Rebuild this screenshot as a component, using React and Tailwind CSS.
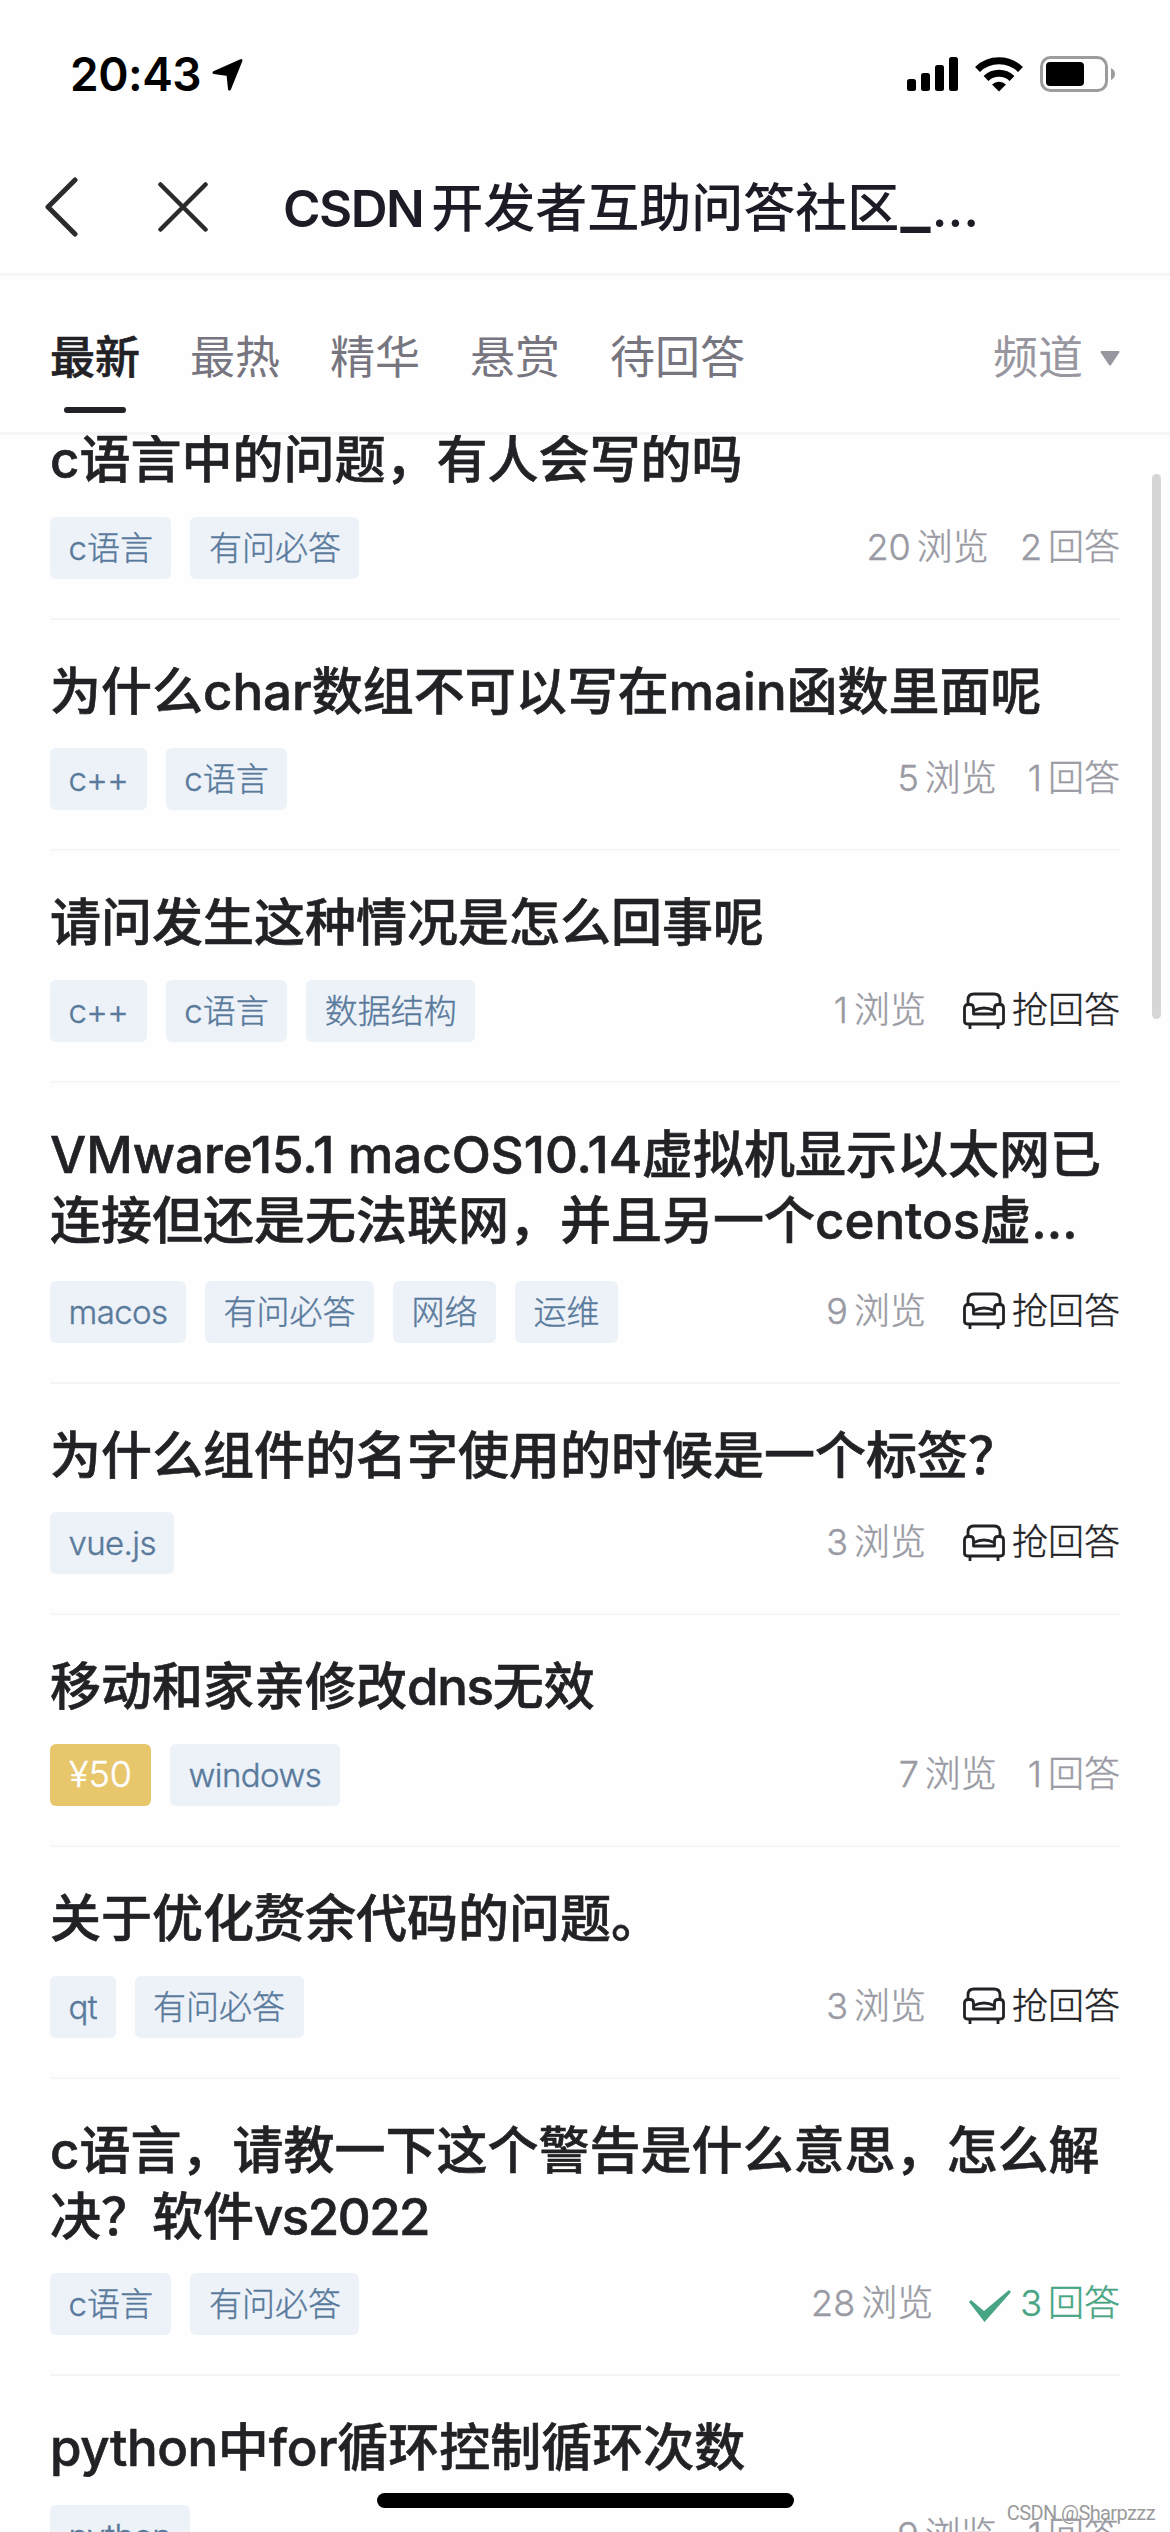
const TABS = ["最热", "精华", "悬赏", "待回答"];

const QUESTIONS = [
  { title: "c语言中的问题，有人会写的吗", tags: ["c语言", "有问必答"], views: 20, answers: 2 },
  { title: "为什么char数组不可以写在main函数里面呢", tags: ["c++", "c语言"], views: 5, answers: 1 },
  { title: "请问发生这种情况是怎么回事呢", tags: ["c++", "c语言", "数据结构"], views: 1, answers: 0 },
  {
    title: "VMware15.1 macOS10.14虚拟机显示以太网已连接但还是无法联网，并且另一个centos虚…",
    tags: ["macos", "有问必答", "网络", "运维"],
    views: 9,
    answers: 0,
    clamped: true,
  },
  { title: "为什么组件的名字使用的时候是一个标签？", tags: ["vue.js"], views: 3, answers: 0 },
  { title: <>移动和家亲修改<span className="tracking-[-1.300px]">dns</span>无效</>, reward: 50, tags: ["windows"], views: 7, answers: 1 },
  { title: "关于优化赘余代码的问题。", tags: ["qt", "有问必答"], views: 3, answers: 0 },
  {
    title: <>c语言，请教一下这个警告是什么意思，怎么解决？软件<span className="tracking-[-1.500px]">vs2022</span></>,
    tags: ["c语言", "有问必答"],
    views: 28,
    answers: 3,
    solved: true,
  },
  { title: <><span className="tracking-[-0.400px]">python</span>中for循环控制循环次数</>, tags: ["python"], views: 9, answers: 1 },
];

function SofaIcon() {
  return (
    <svg className="h-[37px] w-[42px]" viewBox="0 0 42 37" fill="none" stroke="#222226" strokeWidth="2.800" strokeLinejoin="round">
      <path d="M5 12V8Q5 2 11 2H31Q37 2 37 8V12" />
      <path d="M10.500 22V16Q10.500 12.500 7 12.500H5Q1.500 12.500 1.500 16V29Q1.500 32 4.500 32H37.500Q40.500 32 40.500 29V16Q40.500 12.500 37 12.500H35Q31.500 12.500 31.500 16V22Z" />
      <path d="M7 32V37M35 32V37" />
      <path d="M11 18.500Q21 13.500 31 18.500" />
    </svg>
  );
}

function CheckIcon() {
  return (
    <svg className="mt-[5px] h-[32px] w-[42px]" viewBox="0 0 42 32" fill="#47a583">
      <path d="M0 12 2 10 15 21 40 0 42 2 15.500 32Z" />
    </svg>
  );
}

function StatusBar() {
  return (
    <div className="flex h-[148px] items-center justify-between pl-[70px] pr-[54px]">
      <div className="flex items-center gap-[11px]">
        <span className="text-[46px] font-semibold leading-none tracking-[-0.500px] text-black">20:43</span>
        <svg className="h-[33px] w-[31px]" viewBox="0 0 31 33" stroke="#000" strokeWidth="3" strokeLinejoin="round">
          <path d="M2 14.500 29 2.500 17.500 31 16 16.500Z" />
        </svg>
      </div>
      <div className="flex items-center">
        <svg className="h-[34px] w-[51px]" viewBox="0 0 51 34">
          <rect x="0" y="22" width="9" height="12" rx="2.5" />
          <rect x="14" y="16" width="9" height="18" rx="2.5" />
          <rect x="28" y="8" width="9" height="26" rx="2.5" />
          <rect x="42" y="0" width="9" height="34" rx="2.5" />
        </svg>
        <svg className="ml-[17px] h-[36px] w-[48px]" viewBox="0 0 48 36" fill="none" stroke="#000" strokeWidth="7">
          <path d="M2.5 13.500a31 31 0 0 1 43 0" />
          <path d="M11 22.500a19 19 0 0 1 26 0" />
          <path d="M24 35.500 17 28.500a10 10 0 0 1 14 0Z" fill="#000" stroke="none" />
        </svg>
        <svg className="ml-[17px] h-[36px] w-[76px]" viewBox="0 0 76 36">
          <rect x="1.500" y="1.500" width="65" height="33" rx="9" fill="none" stroke="#9c9c9c" strokeWidth="3" />
          <rect x="6" y="6" width="38" height="24" rx="4" />
          <path d="M71 12q4 2 4 6t-4 6Z" fill="#9c9c9c" />
        </svg>
      </div>
    </div>
  );
}

function NavBar() {
  return (
    <div className="flex h-[128px] items-center border-b-[3px] border-[#f5f6f7] pb-[8px] pl-[45px]">
      <svg className="h-[60px] w-[33px]" viewBox="0 0 33 60" fill="none" stroke="#2b2b2d" strokeWidth="5" strokeLinecap="round" strokeLinejoin="round">
        <path d="M30 3 3 30 30 57" />
      </svg>
      <svg className="ml-[80px] h-[50px] w-[50px]" viewBox="0 0 50 50" fill="none" stroke="#2b2b2d" strokeWidth="4.500" strokeLinecap="round">
        <path d="M2.500 2.500 47.500 47.500M47.500 2.500 2.500 47.500" />
      </svg>
      <h1 className="ml-[75px] flex items-baseline whitespace-nowrap text-[52px] font-medium leading-[70px] text-[#1c1b26]">
        <span className="mr-[8px] text-[51px] font-semibold tracking-[-1.500px]">CSDN</span>
        <span>
          开发者互助问答社区
          <span className="mx-[1px] font-['Roboto'] text-[68px] leading-none">_</span>…
        </span>
      </h1>
    </div>
  );
}

function TabBar() {
  return (
    <div className="flex h-[159px] justify-between border-b-[3px] border-[#f5f6f7] px-[50px] pt-[49px] text-[45px] leading-[66px]">
      <div className="flex gap-[50px] text-[#77757f]">
        <div className="flex flex-col items-center">
          <span className="font-medium text-[#222226] [-webkit-text-stroke:0.600px_#222226]">最新</span>
          <span className="mt-[16px] h-[6px] w-[62px] rounded-full bg-[#222226]" />
        </div>
        {TABS.map((t) => (
          <span key={t}>{t}</span>
        ))}
      </div>
      <div className="flex h-[66px] items-center gap-[17px] text-[#98979f]">
        <span>频道</span>
        <svg className="h-[15px] w-[20px]" viewBox="0 0 20 15" fill="#98979f">
          <path d="M1 0H19Q20 1 19 2L11 14Q10 15 9 14L1 2Q0 1 1 0Z" />
        </svg>
      </div>
    </div>
  );
}

function Answers({ count, solved }) {
  if (!count) {
    return (
      <span className="ml-[37px] flex items-center gap-[7px] text-[#222226]">
        <SofaIcon />
        抢回答
      </span>
    );
  }
  if (solved) {
    return (
      <span className="ml-[36px] flex items-center text-[#47a583]">
        <CheckIcon />
        <span className="ml-[9px] mr-[6px]">{count}</span>
        回答
      </span>
    );
  }
  return (
    <span className="ml-[31px] flex gap-[6px]">
      <span>{count}</span>
      <span>回答</span>
    </span>
  );
}

function Tag({ name }) {
  const latin = /^[\w+.]+$/.test(name);
  return (
    <span className={`rounded-[6px] bg-[#ecf2f8] px-[18.500px] text-[#5a7a9c] ${latin ? "tracking-[-0.600px]" : ""}`}>
      {name}
    </span>
  );
}

function Question({ q }) {
  return (
    <li className="border-b-[2px] border-[#f5f6f7] pb-[39px] pt-[39px]">
      <h2 className="text-[51px] font-medium leading-[66px] text-[#222226] [-webkit-text-stroke:0.600px_#222226]">{q.title}</h2>
      <div className={q.clamped ? "mt-[26.500px] flex items-center justify-between" : "mt-[23.700px] flex items-center justify-between"}>
        <div className="flex gap-[19px] text-[33px] font-light leading-[62px] [-webkit-text-stroke:0.400px]">
          {q.reward && <span className="rounded-[6px] bg-[#e8c66b] px-[19px] text-[36px] leading-[60px] text-white">¥{q.reward}</span>}
          {q.tags.map((t) => (
            <Tag key={t} name={t} />
          ))}
        </div>
        <div className="flex items-center pb-[2px] text-[36px] font-light leading-[60px] text-[#999aa3] [-webkit-text-stroke:0.400px]">
          <span className="mr-[6px]">{q.views}</span>
          <span>浏览</span>
          <Answers count={q.answers} solved={q.solved} />
        </div>
      </div>
    </li>
  );
}

export default function App() {
  return (
    <div className="relative flex h-[2532px] w-[1170px] flex-col overflow-hidden bg-[#fefefe] font-['Inter','Noto_Sans_CJK_SC',sans-serif]">
      <StatusBar />
      <NavBar />
      <TabBar />
      <div className="min-h-0 flex-1 overflow-hidden">
        {/* list is scrolled a little, so the first title touches the tab bar */}
        <ul className="mt-[-47px] px-[50px]">
          {QUESTIONS.map((q, i) => (
            <Question key={i} q={q} />
          ))}
        </ul>
      </div>
      <div className="absolute right-[9px] top-[474px] h-[545px] w-[9px] rounded-full bg-[#d6d6d6]" />
      <div className="absolute bottom-[24px] left-[377px] h-[15px] w-[417px] rounded-full bg-black" />
      <div className="absolute bottom-[7px] right-[15px] font-['Roboto',sans-serif] text-[20px] leading-[24px] tracking-[-0.600px] text-[#9a9a9a] [text-shadow:-1px_-1px_0_#fff]">
        CSDN @Sharpzzz
      </div>
    </div>
  );
}
